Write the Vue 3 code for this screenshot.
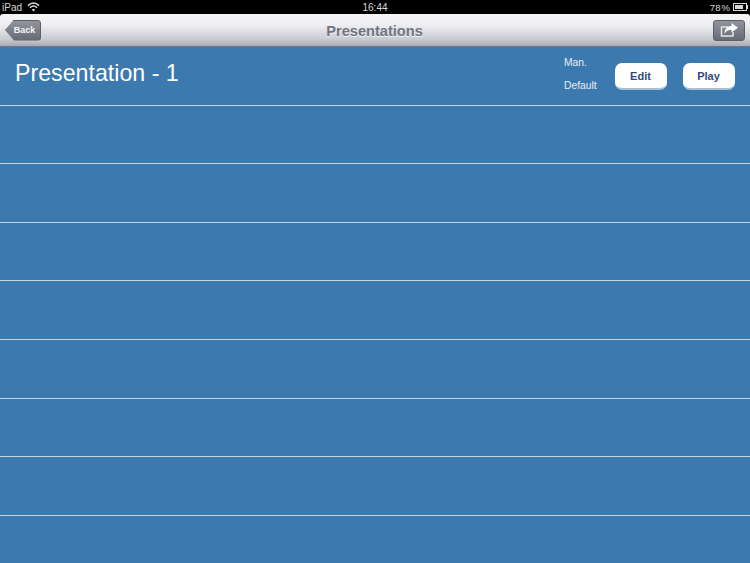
<script setup>
const rows = [1, 2, 3, 4, 5, 6, 7];
</script>

<template>
  <div class="ipad">
    <div class="top">
      <div class="status">
        <div class="status-left">
          <span>iPad</span>
          <svg width="13" height="10" viewBox="0 0 13 10">
            <path d="M1 3.6C4.4.4 8.6.4 12 3.6" fill="none" stroke="#ddd" stroke-width="1.5" />
            <path d="M3 5.7C5.2 3.6 7.8 3.6 10 5.7" fill="none" stroke="#ddd" stroke-width="1.5" />
            <path d="M6.5 9.5 4.7 7.6C5.8 6.7 7.2 6.7 8.3 7.6Z" fill="#ddd" />
          </svg>
        </div>
        <div class="clock">16:44</div>
        <div class="status-right">
          <span class="percent">78 %</span>
          <div class="battery"><div class="battery-fill"></div></div>
          <div class="battery-tip"></div>
        </div>
      </div>

      <div class="navbar">
        <button class="back">Back</button>
        <div class="title">Presentations</div>
        <button class="share">
          <svg width="18" height="14" viewBox="0 0 18 14">
            <path d="M8 4H1.5V13H13V9" fill="none" stroke="#e4e5e8" stroke-width="1.5" />
            <path d="M11.5 0 18 4.7 11.5 9.4V6.7C8 6.7 6 8 4.5 11 4.5 6.5 7 3 11.5 3Z" fill="#fff" />
          </svg>
        </button>
      </div>
    </div>

    <div class="row first">
      <div class="name">Presentation - 1</div>
      <div class="meta">
        <span>Man.</span>
        <span>Default</span>
      </div>
      <button class="action">Edit</button>
      <button class="action">Play</button>
    </div>
    <div v-for="r in rows" :key="r" class="row"></div>
  </div>
</template>

<style>
html, body {
  margin: 0;
  background: #3b79ae;
}
</style>

<style scoped>
.ipad {
  width: 750px;
  height: 563px;
  overflow: hidden;
  font-family: "Liberation Sans", Arial, sans-serif;
  background: #3b79ae;
}
.top {
  background: #000;
}
.status {
  height: 14px;
  color: #d8d8d8;
  font-size: 10px;
  display: flex;
  align-items: center;
  justify-content: space-between;
  padding: 0 2px;
  position: relative;
}
.status-left {
  display: flex;
  align-items: center;
  gap: 5px;
}
.status-right {
  display: flex;
  align-items: center;
  gap: 2px;
}
.percent {
  font-size: 9.5px;
  word-spacing: -1.5px;
  margin-right: 1px;
}
.clock {
  position: absolute;
  left: 0;
  right: 0;
  text-align: center;
}
.battery {
  width: 14px;
  height: 8px;
  box-sizing: border-box;
  border: 1px solid #d8d8d8;
  padding: 1px;
}
.battery-fill {
  width: 78%;
  height: 100%;
  background: #d8d8d8;
}
.battery-tip {
  width: 1px;
  height: 4px;
  margin-left: -2px;
  background: #d8d8d8;
}
.navbar {
  height: 32px;
  border-radius: 3px 3px 0 0;
  background: linear-gradient(#f5f5f8 0%, #eeeef2 35%, #c9c9d0 80%, #a9a9b2 100%);
  border-bottom: 1px solid #77777f;
  display: flex;
  align-items: center;
  justify-content: space-between;
  padding: 0 5px;
  position: relative;
}
.title {
  position: absolute;
  left: 0;
  right: 0;
  text-align: center;
  padding-right: 1px;
  padding-top: 1px;
  font-size: 14.6px;
  font-weight: bold;
  color: #70757f;
  text-shadow: 0 1px 0 #f2f2f2;
}
.back {
  width: 36px;
  height: 21px;
  padding: 0 0 0 3px;
  border: 1px solid #5d6068;
  border-radius: 3px;
  clip-path: polygon(9px 0, 100% 0, 100% 100%, 9px 100%, 0 50%);
  background: linear-gradient(#92949c, #686b74);
  color: #f4f4f6;
  font: bold 9px "Liberation Sans", Arial, sans-serif;
}
.share {
  width: 32px;
  height: 21px;
  padding: 0;
  border: 1px solid #5d6068;
  border-radius: 3px;
  background: linear-gradient(#92949c, #686b74);
  display: flex;
  align-items: center;
  justify-content: center;
  z-index: 1;
}
.row {
  height: 57.6px;
  border-bottom: 1px solid #c5d6e5;
  display: flex;
  align-items: center;
}
.first {
  padding: 0 15px;
}
.name {
  flex: 1;
  color: #fff;
  font-size: 23.2px;
  margin-top: -4px;
}
.meta {
  display: flex;
  flex-direction: column;
  gap: 12px;
  width: 51px;
  color: #e6eef6;
  font-size: 10.3px;
  margin-top: -4px;
}
.action {
  width: 52px;
  height: 27px;
  margin-top: 2px;
  margin-left: 16px;
  padding: 0 1px 0 0;
  border: 0;
  border-bottom: 2px solid #a9c0d6;
  border-radius: 7px;
  background: #fff;
  color: #2f4a7e;
  font: bold 11px "Liberation Sans", Arial, sans-serif;
}
.meta + .action {
  margin-left: 0;
}
</style>
